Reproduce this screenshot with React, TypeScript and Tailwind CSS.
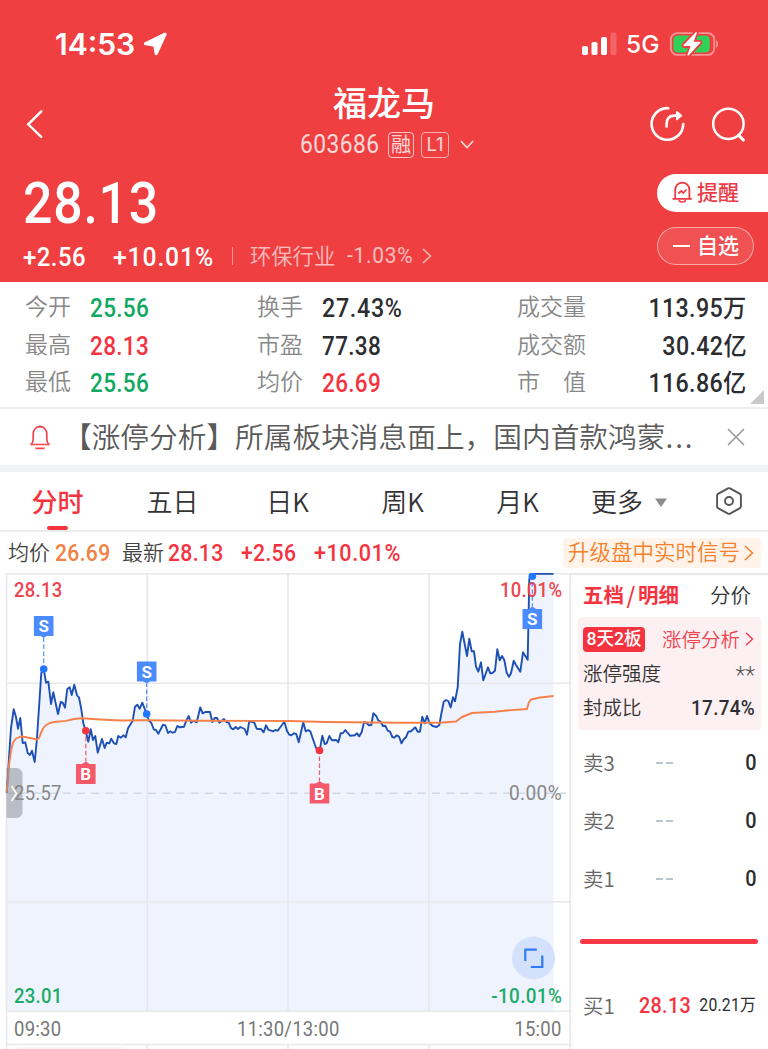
import React from 'react';
import clsx from 'clsx';

const PRICE: [number, number][] = [
  [6.7, 792.7], [11, 728], [13.7, 709.3], [16, 717], [18, 728.7], [20.3, 718], [22.7, 743], [25.3, 742.3],
  [27.7, 753], [30, 755], [32, 750.7], [34.7, 762], [37, 738], [41.3, 672.7], [43.7, 669], [46, 682.7],
  [48.3, 681.7], [51, 704], [53.3, 692.3], [58, 714], [60.7, 702], [62.7, 702.7], [65, 707.7], [67.3, 689],
  [69.7, 687.3], [71.7, 695], [74.3, 684.7], [77, 695.3], [79, 697.3], [81.3, 709.3], [83.3, 723.3],
  [85.7, 730.7], [88.3, 741.7], [90.7, 729.3], [93, 740], [95.3, 736], [97.7, 752.7], [102, 739], [104.7, 748],
  [106.7, 742.7], [109.3, 743.3], [111.3, 738.7], [114, 743.3], [116.3, 744], [118.3, 736], [121, 737.7],
  [123.3, 735.3], [125.7, 737.3], [128, 728.3], [132.7, 720.7], [135, 706.7], [137.3, 704.7], [139.7, 708.7],
  [142.3, 702.7], [146.7, 714], [149, 720.7], [151.3, 722.7], [153.7, 729.3], [156, 730], [158.3, 733.7],
  [163, 724.7], [165.3, 725.3], [168, 733], [170.3, 731.3], [172.7, 732.7], [175, 732], [177.3, 726],
  [179.7, 727.3], [184, 726.7], [186.3, 720.7], [188.7, 716], [191, 722.7], [193.3, 720.7], [196.7, 722.3],
  [200.3, 707.3], [202.7, 713.3], [205.3, 712], [210, 712], [212.3, 722], [214.7, 718], [217, 718],
  [219.3, 722.7], [224, 719], [226.3, 722], [228.7, 722.7], [231, 728], [233.3, 729.3], [235.7, 727],
  [238, 729], [240.3, 727], [244.7, 729], [247, 734.7], [249.3, 721], [254.3, 722.7], [256.7, 728.7],
  [261.3, 729.3], [263.7, 732.3], [266, 725.3], [268.3, 729.7], [273, 731.3], [275.3, 730], [277.7, 730.7],
  [284.3, 721.7], [287, 731], [289.3, 734.7], [291.3, 735.3], [294, 733.3], [296.3, 734], [298.7, 742.3],
  [303.3, 722.3], [305.7, 731.3], [308, 730], [310.3, 731.3], [315, 745], [317.7, 752], [319.7, 750.3],
  [322.3, 735.7], [324.7, 744], [326.7, 743.3], [329.3, 736], [332, 740.3], [336.3, 740], [338.3, 742.3],
  [340.7, 733.3], [343, 733], [345.3, 730], [350, 735.7], [354.7, 735.3], [357, 733.3], [359.3, 736.3],
  [361.7, 732], [364, 722.3], [366.3, 722.7], [369, 725.3], [371.3, 725], [373.3, 713.3], [376, 715.7],
  [378.3, 720.3], [380.7, 721.7], [383, 726], [385.3, 725.7], [387.7, 730.7], [390, 731.7], [392.3, 737],
  [394.3, 737.7], [396.7, 735.3], [399, 736.5], [401.5, 743.3], [403.7, 739.3], [406, 737.3], [408.3, 731.7],
  [411, 731.3], [415.3, 727.3], [417.7, 731.7], [420, 731.7], [422.3, 716.7], [424.7, 723.3], [427, 716],
  [429.7, 723.3], [432.7, 726], [436.7, 727], [439.3, 725], [441.3, 714], [443.7, 701.7], [446, 700],
  [448.3, 701], [450.7, 707.3], [453, 697.3], [455, 701.3], [457.7, 687.3], [460, 644], [462.3, 631.7],
  [467, 656], [469.3, 638.7], [471.7, 651.3], [474, 651.3], [476, 666.7], [478.3, 671.7], [481, 662.3],
  [483.3, 680.3], [488, 667.3], [490.3, 673.3], [492.3, 673], [495, 670.7], [497.3, 649.3], [499.7, 660.3],
  [502, 656], [504.3, 660], [506.7, 672.7], [509, 676.7], [511, 673.3], [513.7, 660.7], [516, 665],
  [520.3, 671.7], [523, 652.3], [527.7, 659.7], [529.3, 579], [532, 573.7], [553.5, 573.7],
];

const AVERAGE: [number, number][] = [
  [6.7, 792.7], [9, 765], [11, 751], [13, 742.5], [16, 738.5], [21, 736.3], [30, 738], [37, 739.5], [39, 738],
  [41, 733], [43, 728.5], [46, 725], [50, 723], [54, 722], [66, 720.9], [74, 719], [82, 718.3], [100, 719.5],
  [120, 720.5], [146, 720.3], [200, 720.7], [290, 721], [325, 722], [400, 722.7], [440, 722.7], [456, 721.5],
  [462, 717], [472, 713], [495, 711.7], [504, 710.7], [527, 709], [529, 702], [531, 699.5], [540, 697.5], [553.5, 696],
];

const toPoints = (list: [number, number][]) => list.map((p) => p.join(',')).join(' ');

interface NumProps {
  children: React.ReactNode;
  className?: string;
  /** horizontal squeeze and origin of the condensed figures */
  fit?: string;
}

/** Condensed figures used for every price and ratio */
function Num({ children, className = '', fit = 'origin-left scale-x-[0.9] tracking-[0.015em]' }: NumProps) {
  return (
    <span className={clsx("font-['Roboto','Noto_Sans_CJK_SC',sans-serif] leading-none whitespace-nowrap", className)}>
      <span className={clsx('inline-block', fit)}>{children}</span>
    </span>
  );
}

const FIT_RIGHT = 'origin-right scale-x-[0.9] tracking-[0.015em]';
const FIT_WIDE = 'origin-left scale-x-[0.93] tracking-[0.03em]';

interface MarkerProps {
  x: number;
  dot: number;
  box: number;
  kind: 'S' | 'B';
}

/** Buy / sell flag joined to its point on the price line */
function Marker({ x, dot, box, kind }: MarkerProps) {
  const sell = kind === 'S';
  const color = sell ? '#2177ff' : '#f5333f';
  const below = box > dot;
  const tip = below ? box - 2.5 : box + 22;
  const base = below ? box + 0.5 : box + 19;
  return (
    <g>
      <line x1={x} x2={x} y1={below ? dot + 6 : dot - 6} y2={tip} stroke={color} strokeWidth="1.2" strokeDasharray="4.5 2.5" opacity="0.8" />
      <circle cx={x} cy={dot} r="3.8" fill={color} />
      <g fill={sell ? '#4a8cff' : '#f5596a'}>
        <rect x={x - 9.8} y={box} width="19.6" height="20" rx="0.5" />
        <path d={`M${x - 4.5} ${base}L${x} ${tip}L${x + 4.5} ${base}z`} />
      </g>
      <text
        x={x}
        y={box + 16}
        textAnchor="middle"
        fill="#fff"
        className="font-['Roboto',sans-serif] text-[17px] font-bold"
      >
        {kind}
      </text>
    </g>
  );
}

function Chevron({ className = '', width = 2 }: { className?: string; width?: number }) {
  return (
    <svg viewBox="0 0 10 16" className={className} fill="none" stroke="currentColor" strokeWidth={width}>
      <path d="M1 1l7.5 7L1 15" />
    </svg>
  );
}

function StatusBar() {
  return (
    <div className="flex h-[82px] pt-[6px] items-center pl-[55px] pr-[48px]">
      <span className="w-[88px] font-['Inter',sans-serif] text-[30px] leading-none font-semibold">14:53</span>
      <svg viewBox="0 0 24 24" className="h-6 w-6" fill="currentColor" stroke="currentColor" strokeWidth="3.2" strokeLinejoin="round">
        <path d="M22 2.300 2.600 11.700 11.800 13.100l1.400 8.500z" />
      </svg>
      <div className="ml-auto flex items-center">
        <svg viewBox="0 0 36 24" className="h-6 w-9" fill="currentColor">
          <rect x="0" y="14" width="6" height="9" rx="1.8" />
          <rect x="9.5" y="10" width="6" height="13" rx="1.8" />
          <rect x="19" y="5" width="6" height="18" rx="1.8" />
          <rect x="28.5" y="0.5" width="6" height="22.5" rx="1.8" opacity="0.2" />
        </svg>
        <span className="ml-[8px] w-[44px] font-['Inter',sans-serif] text-[24.5px] leading-none font-medium">5G</span>
        <svg viewBox="0 0 50 24" className="h-6 w-[50px]">
          <rect x="0.9" y="1.1" width="43.4" height="21.8" rx="6.5" fill="none" stroke="#fff" strokeOpacity="0.45" strokeWidth="1.8" />
          <rect x="3.4" y="3.6" width="36.4" height="16.8" rx="4.2" fill="#30d158" />
          <path d="M46.3 8.3c2.3.6 2.3 6.8 0 7.4z" fill="#fff" fillOpacity="0.5" />
          <path
            d="M25.5.4 13.700 12.800c-.6.7-.2 1.300.6 1.300h6.300l-3.100 8.500c-.3 1 .6 1.400 1.300.7L30.200 11c.6-.7.2-1.300-.6-1.300h-6L26.800 1.200c.3-1-.6-1.500-1.300-.8z"
            fill="#fff"
            stroke="#ef3f41"
            strokeWidth="3.6"
            paintOrder="stroke"
          />
        </svg>
      </div>
    </div>
  );
}

function NavBar() {
  return (
    <div className="grid h-[84px] grid-cols-[1fr_180px_1fr] items-center">
      <svg viewBox="0 0 18 30" className="ml-[26px] h-[30px] w-[18px]" fill="none" stroke="currentColor" strokeWidth="2.4" strokeLinecap="round">
        <path d="M15.3 2.3 2.2 15.300l13.100 12.500" />
      </svg>
      <div>
        <h1 className="flex h-[42px] items-center justify-center pb-[4px] text-[34px] leading-none font-medium">福龙马</h1>
        <div className="flex h-[41px] items-center pb-px pl-[6px] whitespace-nowrap text-white/80">
          <Num className="w-[88px] text-[25px]" fit="origin-left scale-x-[0.91] tracking-[0.02em]">603686</Num>
          <span className="flex h-[26px] w-[26px] shrink-0 items-center justify-center rounded-[4px] border border-white/70 pb-[2px] text-[20px] leading-none">融</span>
          <span className="ml-[7px] flex h-[26px] w-[28px] shrink-0 items-center justify-center rounded-[4px] border border-white/60 font-['Inter',sans-serif] text-[18.5px] leading-none">L1</span>
          <svg viewBox="0 0 14 9" className="ml-[11px] h-[9px] w-[14px] shrink-0" fill="none" stroke="currentColor" strokeWidth="1.6">
            <path d="M.8 1 7 7.600 13.200 1" />
          </svg>
        </div>
      </div>
      <div className="flex items-center justify-end gap-[25px] pr-[21px]">
        <svg viewBox="0 0 36 36" className="h-9 w-9" fill="none" stroke="currentColor" strokeWidth="2.6" strokeLinecap="round" strokeLinejoin="round">
          <path d="M18.300 2.200A15.800 15.800 0 1 0 33.200 18" />
          <path d="M16.600 20.500v-2.300c0-5.800 2.700-8.600 8-8.600h4" />
          <path d="M26.900 5.900l4.400 3.700-4.400 3.700z" fill="currentColor" strokeWidth="1.8" />
        </svg>
        <svg viewBox="0 0 36 36" className="h-9 w-9" fill="none" stroke="currentColor" strokeWidth="2.5" strokeLinecap="round">
          <circle cx="17.4" cy="17.9" r="15.2" />
          <path d="M27.600 29.200l4.700 4.800" strokeWidth="3.2" />
        </svg>
      </div>
    </div>
  );
}

function Quote() {
  return (
    <div className="flex h-[116px] justify-between">
      <div className="pl-[23px]">
        <Num className="flex h-[75px] items-center text-[57.5px] font-medium">28.13</Num>
        <div className="flex h-[34px] items-center leading-none">
          <Num className="w-[90px] pb-[2px] text-[26px] font-medium" fit="origin-left scale-x-[0.92] tracking-[0.02em]">+2.56</Num>
          <Num className="w-[119px] pb-[2px] text-[26px] font-medium" fit="origin-left scale-x-[0.95] tracking-[0.035em]">+10.01%</Num>
          <span className="mr-[17px] mb-1 h-[18px] w-px bg-white/45" />
          <span className="w-[97px] pb-[7px] text-[21.3px] font-[350] text-white/65">环保行业</span>
          <Num className="w-[75px] pb-[4px] text-[22px] text-white/65" fit="origin-left scale-x-[0.95] tracking-[0.035em]">-1.03%</Num>
          <Chevron className="mb-[5px] h-4 w-[10px] text-white/65" width={1.5} />
        </div>
      </div>
      <div className="flex flex-col gap-[15px] pt-[8px] text-[21px] leading-none font-medium">
        <div className="flex h-[38px] w-[111px] items-center rounded-l-full bg-white pl-[15px] text-[#ee3a45]">
          <svg viewBox="0 0 21 22" className="mr-[4px] mb-[2px] h-[22px] w-[21px]" fill="none" stroke="currentColor" strokeWidth="1.8" strokeLinecap="round" strokeLinejoin="round">
            <path d="M1.200 17.800h18M3.200 17.500V8.700a7.100 7.100 0 0 1 14.200 0v8.800M7.300 19.800c1.600 1.500 4.400 1.500 6 0" />
            <path d="M6.800 12l2.400-2 2.200 2 2.600-3" strokeWidth="1.7" />
          </svg>
          <span className="pb-[3px]">提醒</span>
        </div>
        <div className="flex h-[38px] w-[97px] items-center rounded-full border border-white/50 bg-white/10 pl-[15px]">
          <span className="mr-[7px] h-[2px] w-[17px] bg-white" />
          <span className="pb-[3px]">自选</span>
        </div>
      </div>
    </div>
  );
}

const STATS = [
  ['今开', '25.56', 'text-[#12a862]', '换手', '27.43%', 'text-[#2c2d30]', '成交量', '113.95万'],
  ['最高', '28.13', 'text-[#f5333f]', '市盈', '77.38', 'text-[#2c2d30]', '成交额', '30.42亿'],
  ['最低', '25.56', 'text-[#12a862]', '均价', '26.69', 'text-[#f5333f]', '市　值', '116.86亿'],
];

function Stats() {
  return (
    <div className="relative flex h-[127px] flex-col border-b-2 border-[#efeff1] pt-[8px] text-[23px] leading-none">
      {STATS.map((row) => (
        <div key={row[0]} className="flex h-[37.6px] items-center pl-[25px] pr-[21px]">
          <span className="w-[65px] pb-[6px] font-[350] text-[#888]">{row[0]}</span>
          <Num className={clsx('w-[167px] text-[25px] font-medium', row[2])}>{row[1]}</Num>
          <span className="w-[65px] pb-[6px] font-[350] text-[#888]">{row[3]}</span>
          <Num className={clsx('w-[195px] text-[25px] font-medium', row[5])} fit={row[4].endsWith('%') ? FIT_WIDE : undefined}>
            {row[4]}
          </Num>
          <span className="pb-[6px] font-[350] text-[#888]">{row[6]}</span>
          <Num className="ml-auto text-[25px] font-medium text-[#2c2d30]" fit="origin-right scale-x-[0.93] tracking-[0.015em]">
            {row[7]}
          </Num>
        </div>
      ))}
      <svg viewBox="0 0 14 14" className="absolute right-[4px] bottom-[3px] h-[14px] w-[14px]">
        <path d="M14 0v14H0z" fill="#c9c9c9" />
      </svg>
    </div>
  );
}

function News() {
  return (
    <div className="flex h-[63px] items-center border-b-[7px] border-[#f1f2f7]">
      <svg viewBox="0 0 20 26" className="ml-[30px] h-[26px] w-[20px] shrink-0" fill="none" stroke="#f04450" strokeWidth="1.7" strokeLinejoin="round">
        <path d="M10 1.200v1.500M1 20.500h18c-1.700-1.800-2.200-3-2.200-5V9.800C16.800 5.800 14 2.700 10 2.700S3.200 5.800 3.200 9.800v5.700c0 2-.5 3.200-2.200 5zM5.500 24.300h9" />
      </svg>
      <span className="ml-[13px] w-[665px] pb-[1px] text-[28.7px] leading-none font-[350] whitespace-nowrap text-[#5a5a5a]">
        【涨停分析】所属板块消息面上，国内首款鸿蒙<span className="tracking-[2px]">...</span>
      </span>
      <svg viewBox="0 0 18 18" className="mr-[23px] mb-[1px] h-[18px] w-[18px] shrink-0" fill="none" stroke="#999" strokeWidth="1.6">
        <path d="M1 1l16 16M17 1 1 17" />
      </svg>
    </div>
  );
}

function Tabs() {
  return (
    <div className="flex h-[60px] border-b-2 border-[#ececee] text-[26px] leading-none font-[350] text-[#333]">
      <div className="flex w-[115px] flex-col items-center pt-[16px] font-medium text-[#f5333f]">
        分时
        <span className="mt-[12px] h-[6px] w-[21px] rounded-full bg-[#f5333f]" />
      </div>
      {['五日', '日K', '周K', '月K'].map((t) => (
        <div key={t} className="w-[115px] pt-[16px] text-center">
          {t}
        </div>
      ))}
      <div className="w-[80px] pt-[16px] pl-[16px] whitespace-nowrap">更多</div>
      <svg viewBox="0 0 12 9" className="mt-[26px] h-[9px] w-[12px]">
        <path d="M0 .5h12L6 9z" fill="#8c8c8c" />
      </svg>
      <svg viewBox="0 0 26 28" className="mt-[15px] ml-[49px] h-[28px] w-[26px]" fill="none" stroke="#555" strokeWidth="1.9" strokeLinejoin="round">
        <path d="M12 1.400q1-.5 2 0l10 5.500q.9.500.9 1.600v11q0 1.100-.9 1.600l-10 5.500q-1 .5-2 0l-10-5.500q-.9-.5-.9-1.600v-11q0-1.100.9-1.600z" />
        <circle cx="13" cy="14" r="4" />
      </svg>
    </div>
  );
}

function InfoBar() {
  return (
    <div className="flex h-[41px] items-center pl-[8px] pr-[7px] leading-none text-[#f5333f]">
      <span className="w-[47px] pb-[2px] text-[21px] font-[350] text-[#444]">均价</span>
      <Num className="w-[67px] pt-[3px] text-[23.5px] font-medium text-[#ee8244]">26.69</Num>
      <span className="w-[46px] pb-[2px] text-[21px] font-[350] text-[#444]">最新</span>
      <Num className="w-[73px] pt-[3px] text-[23.5px] font-medium">28.13</Num>
      <Num className="w-[73px] pt-[3px] text-[23.5px] font-medium">+2.56</Num>
      <Num className="pt-[3px] text-[23.5px] font-medium" fit="origin-left scale-x-[0.92] tracking-[0.025em]">+10.01%</Num>
      <span className="ml-auto flex h-[30px] w-[198px] items-center rounded-[4px] bg-[#fff3ea] pl-[5px] text-[21.5px] whitespace-nowrap text-[#f5812a]">
        <span className="pb-[3px] font-[350]">升级盘中实时信号</span>
        <Chevron className="ml-[4px] h-[16px] w-[10px] shrink-0" width={1.6} />
      </span>
    </div>
  );
}

function Chart() {
  return (
    <div className="relative h-[476px] w-[571px] shrink-0">
      <svg viewBox="0 573 571 476" className="h-full w-full">
        <polygon points={`${toPoints(PRICE)} 553.5,1011 6.5,1011`} fill="#eef3fe" />
        <g stroke="#e8e8ea" strokeWidth="1.6" fill="none">
          <path d="M6.500 573v476M147.300 573v438M288 573v438M429 573v438M570.200 573v476" />
          <path d="M6 573.800h564M6 683.200h564M6 901.700h564M6 1011.300h564M6 1044.500h564" />
          <path d="M147.300 1044v5M288 1044v5M429 1044v5" />
        </g>
        <path d="M6 793.300h560" stroke="#cfd9e2" strokeWidth="1.5" strokeDasharray="8 6.2" />
        <path d="M17 1048h105" stroke="#f5f5f5" strokeWidth="2" />
        <polyline points={toPoints(PRICE)} fill="none" stroke="#1d50b4" strokeWidth="1.9" strokeLinejoin="round" />
        <polyline points={toPoints(AVERAGE)} fill="none" stroke="#f68049" strokeWidth="1.9" strokeLinejoin="round" />
        <path d="M6.500 768h10a6 6 0 0 1 6 6v38a6 6 0 0 1-6 6h-10z" fill="#8e9096" fillOpacity="0.55" />
        <path d="M11.500 786l5 7.500-5 7.500" fill="none" stroke="#fff" strokeWidth="1.5" />
      </svg>
      <div className="absolute inset-0 text-[20.5px] leading-none">
        <Num className="absolute top-[7px] left-[14px] font-medium text-[#ee4450]">28.13</Num>
        <Num className="absolute top-[7px] right-[9px] font-medium text-[#ee4450]" fit={FIT_RIGHT}>10.01%</Num>
        <Num className="absolute top-[210px] left-[14px] text-[#888]">25.57</Num>
        <Num className="absolute top-[210px] right-[9px] text-[#888]" fit="origin-right scale-x-[0.93] tracking-[0.02em]">0.00%</Num>
        <Num className="absolute top-[413px] left-[14px] font-medium text-[#1cab68]">23.01</Num>
        <Num className="absolute top-[413px] right-[9px] font-medium text-[#1cab68]" fit="origin-right scale-x-[0.92] tracking-[0.02em]">-10.01%</Num>
        <Num className="absolute top-[446px] left-[14px] text-[#777]">09:30</Num>
        <Num className="absolute top-[446px] left-[237px] text-[#777]">11:30/13:00</Num>
        <Num className="absolute top-[446px] right-[9px] text-[#777]" fit={FIT_RIGHT}>15:00</Num>
      </div>
      <svg viewBox="0 573 571 476" className="absolute inset-0 h-full w-full">
        <Marker x={43.7} dot={669} box={616} kind="S" />
        <Marker x={146.7} dot={714} box={661.5} kind="S" />
        <Marker x={85.8} dot={730.7} box={764} kind="B" />
        <Marker x={319.5} dot={750.5} box={783.5} kind="B" />
        <Marker x={532.3} dot={576.3} box={609} kind="S" />
        <circle cx="533.5" cy="958" r="21.5" fill="#d3e1fd" />
        <path d="M525.300 961v-11.300h11.500M542.300 955.500v11.500h-11.500" fill="none" stroke="#2f7bf6" strokeWidth="2.2" />
      </svg>
    </div>
  );
}

function OrderBook() {
  return (
    <div className="flex-1 border-t-2 border-[#e8e8ea] leading-none text-[#333]">
      <div className="flex h-[42px] items-center justify-between pb-[3px] pl-[12px] pr-[17px] text-[20.5px]">
        <span className="font-bold text-[#f5333f]">
          五档<span className="inline-block scale-110 px-[3px] font-medium">/</span>明细
        </span>
        <span className="font-[350]">分价</span>
      </div>
      <div className="mr-[7px] ml-[7px] h-[113px] rounded-[4px] bg-[#fdf0f2] px-[5px] pt-[5px] text-[19.5px] font-[350]">
        <div className="flex h-[34px] items-center">
          <Num className="flex h-[25px] w-[62px] items-center justify-center rounded-[4px] bg-[#f5333f] text-[18.5px] font-medium text-white" fit="scale-x-[0.95]">
            8天2板
          </Num>
          <span className="ml-[17px] w-[83px] text-[#f04450]">涨停分析</span>
          <Chevron className="h-[14px] w-[9px] text-[#f04450]" width={1.6} />
        </div>
        <div className="flex h-[34px] items-center justify-between">
          <span>涨停强度</span>
          <Num className="pt-[5px] pr-px text-[23px] text-[#555]" fit="">**</Num>
        </div>
        <div className="flex h-[34px] items-center justify-between">
          <span>封成比</span>
          <Num className="pt-[3px] pr-px text-[21px] font-medium text-[#2c2d30]" fit={FIT_RIGHT}>17.74%</Num>
        </div>
      </div>
      <div className="pt-[3.5px]">
        {['卖3', '卖2', '卖1'].map((label) => (
          <div key={label} className="flex h-[58px] items-center pr-[11px] pl-[12px]">
            <span className="w-[73px] pb-[1px] text-[20.5px] font-[350] text-[#666]">{label}</span>
            <span className="flex gap-[3px]">
              <i className="h-[2px] w-[7px] bg-[#bcc3cd]" />
              <i className="h-[2px] w-[7px] bg-[#bcc3cd]" />
            </span>
            <Num className="ml-auto pt-px text-[22px] font-medium text-[#2c2d30]" fit={FIT_RIGHT}>0</Num>
          </div>
        ))}
      </div>
      <div className="mt-[31px] mr-[10px] ml-[9px] h-[5px] rounded-full bg-[#f93a46]" />
      <div className="mt-[33px] flex h-[58px] items-center pr-[12px] pl-[12px] whitespace-nowrap">
        <span className="w-[56px] pb-[1px] text-[20.5px] font-[350] text-[#666]">买1</span>
        <Num className="w-[50px] pt-px text-[22px] font-medium text-[#f5333f]">28.13</Num>
        <Num className="ml-auto pt-px text-[17.5px] text-[#2c2d30]" fit={FIT_RIGHT}>20.21万</Num>
      </div>
    </div>
  );
}

export default function App() {
  return (
    <div className="h-[1049px] w-[768px] overflow-hidden bg-white font-['Noto_Sans_CJK_SC',sans-serif]">
      <header className="h-[282px] bg-[#ef3f41] text-white">
        <StatusBar />
        <NavBar />
        <Quote />
      </header>
      <Stats />
      <News />
      <Tabs />
      <InfoBar />
      <div className="flex">
        <Chart />
        <OrderBook />
      </div>
    </div>
  );
}
